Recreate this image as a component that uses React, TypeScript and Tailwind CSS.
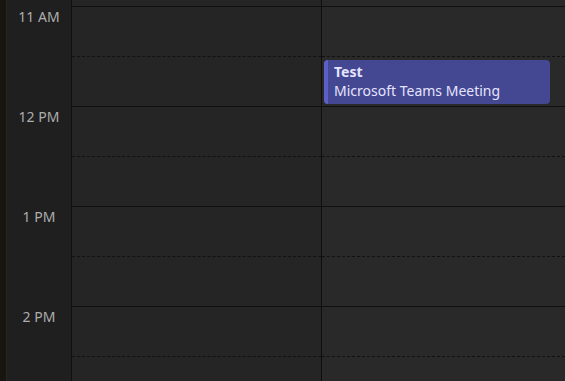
const hours = ['11 AM', '12 PM', '1 PM', '2 PM'];

function HourRow({ last }: { last?: boolean }) {
  return (
    <div className="flex flex-col h-[100px] shrink-0">
      <div className="h-[50px] shrink-0 border-b border-dashed border-[#121212]" />
      <div className={last ? 'h-[50px] shrink-0' : 'h-[50px] shrink-0 border-b border-[#101010]'} />
    </div>
  );
}

function DayColumn({ className, children }: { className: string; children?: React.ReactNode }) {
  return (
    <div className={`relative flex flex-col ${className}`}>
      <div className="h-[7px] shrink-0 border-b border-[#101010]" />
      {hours.map((h, i) => (
        <HourRow key={h} last={i === hours.length - 1} />
      ))}
      {children}
    </div>
  );
}

export default function App() {
  return (
    <div
      className="flex h-[381px] w-[565px] overflow-hidden bg-[#1f1f1f]"
      style={{ fontFamily: '"Noto Sans", "Open Sans", sans-serif' }}
    >
      {/* left app rail edge */}
      <div className="w-[6px] shrink-0 bg-[#18140f]" />
      <div className="w-px shrink-0 bg-[#262626]" />

      {/* time gutter */}
      <div className="w-[65px] shrink-0 flex flex-col bg-[#1f1f1f] border-r border-[#101010]">
        <div className="h-[7px] shrink-0" />
        {hours.map((h) => (
          <div key={h} className="h-[100px] shrink-0 text-center text-[14px] leading-[20px] text-[#adadad]">
            {h}
          </div>
        ))}
      </div>

      <DayColumn className="w-[250px] shrink-0 bg-[#252525] border-r border-[#0e0e0e]" />
      <DayColumn className="flex-1 bg-[#292929]">
        <div className="absolute left-[2px] right-[15px] top-[60px] h-[44px] flex rounded-[4px] overflow-hidden bg-[#444791]">
          <div className="w-[4px] shrink-0 bg-[#5b5fc7]" />
          <div className="pl-[6px] pt-[2px] text-[14px] leading-[19px] text-[#e4e4ff]">
            <div className="font-bold">Test</div>
            <div>Microsoft Teams Meeting</div>
          </div>
        </div>
      </DayColumn>
    </div>
  );
}
